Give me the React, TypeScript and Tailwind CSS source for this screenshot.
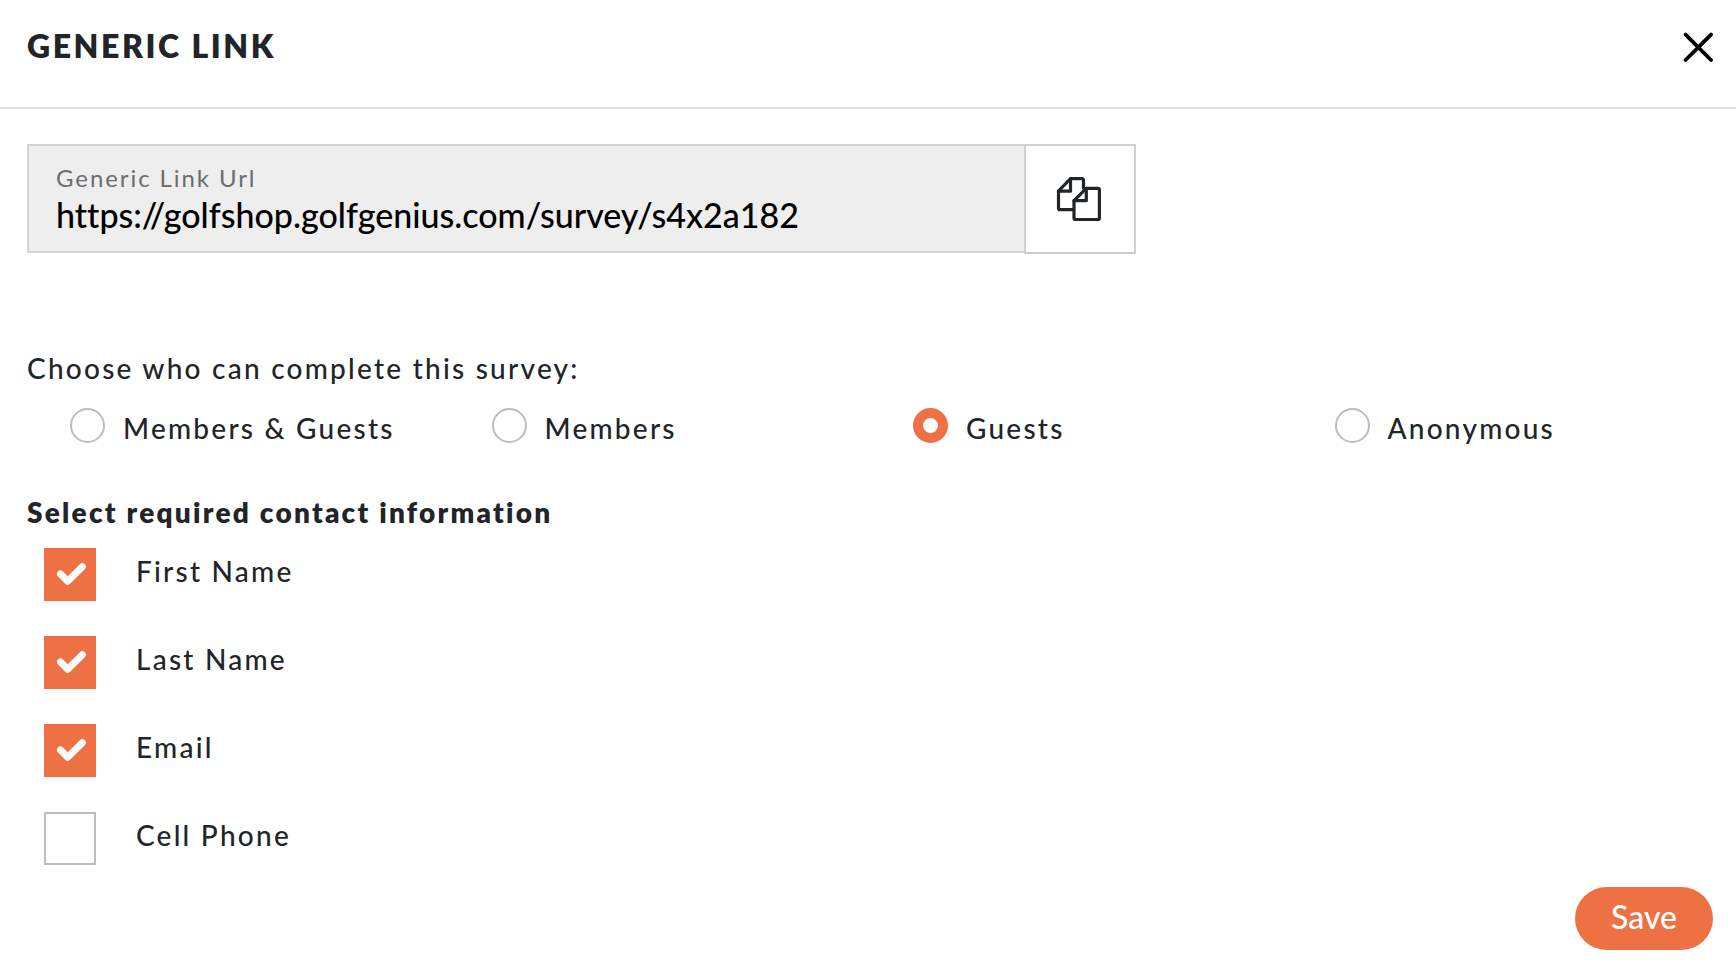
import { useState } from 'react';

const audiences = ['Members & Guests', 'Members', 'Guests', 'Anonymous'];
const contactFields = ['First Name', 'Last Name', 'Email', 'Cell Phone'];

function CloseIcon() {
  return (
    <svg viewBox="0 0 30 30" className="size-[30px]" fill="none" stroke="currentColor" strokeWidth="3.8" strokeLinecap="round" aria-hidden="true">
      <path d="M2.6 2.6l25.4 25.4M28 2.6L2.6 28" />
    </svg>
  );
}

function CopyIcon() {
  return (
    <svg viewBox="1 0 44 44" className="size-11" fill="none" stroke="currentColor" strokeWidth="3.2" strokeLinejoin="round" strokeLinecap="round" aria-hidden="true" overflow="visible">
      <path d="M16.5 32.7H3a1.5 1.5 0 0 1-1.5-1.5V14L13.5 1.7H25a1.5 1.5 0 0 1 1.5 1.5v8" />
      <path d="M13.5 1.7V14.2H1.5" />
      <path d="M29.3 11.3h11.6a1.5 1.5 0 0 1 1.5 1.5V41a1.5 1.5 0 0 1-1.5 1.5H18.5A1.5 1.5 0 0 1 17 41V23.7z" />
      <path d="M29.3 11.3v12.4H17" />
    </svg>
  );
}

function CheckIcon() {
  return (
    <svg viewBox="0 0 52 53" className="pointer-events-none col-start-1 row-start-1 hidden h-[53px] w-[52px] peer-checked:block" fill="none" stroke="white" strokeWidth="7" strokeLinecap="round" strokeLinejoin="round" aria-hidden="true">
      <path d="M16.5 26l7.2 7.2L38.3 18.7" />
    </svg>
  );
}

export default function App() {
  const [audience, setAudience] = useState('Guests');
  const [required, setRequired] = useState(['First Name', 'Last Name', 'Email']);

  const toggle = (field: string) =>
    setRequired((list) => (list.includes(field) ? list.filter((f) => f !== field) : [...list, field]));

  return (
    <div className="min-h-screen bg-white font-['Lato',sans-serif] text-[28px] leading-9 font-medium text-[#212529] [font-variant-ligatures:none]">
      <header className="flex items-start justify-between border-b-2 border-[#dee2e6] pt-7 pr-[23px] pb-[43px] pl-[27px]">
        <h1 className="text-[32px] leading-9 font-extrabold tracking-[0.08em]">GENERIC LINK</h1>
        <button type="button" aria-label="Close" className="mt-1 text-black">
          <CloseIcon />
        </button>
      </header>

      <form className="pt-[35px] pr-[23px] pb-[30px] pl-[27px]" onSubmit={(e) => e.preventDefault()}>
        <div className="flex w-full max-w-[1109px]">
          <div className="flex h-[109px] min-w-0 flex-1 flex-col border-2 border-r-0 border-[#ced4da] bg-[#eeeeee] px-[27px] pt-[18px]">
            <label htmlFor="link-url" className="text-2xl leading-7 font-normal tracking-[0.08em] text-[#6c6d70]">
              Generic Link Url
            </label>
            <input
              id="link-url"
              readOnly
              value="https://golfshop.golfgenius.com/survey/s4x2a182"
              className="h-11 w-full bg-transparent text-[34px] text-black outline-none"
            />
          </div>
          <button type="button" aria-label="Copy link" className="flex h-[110px] w-28 items-center justify-center border-2 border-[#d0d0d0] bg-white">
            <CopyIcon />
          </button>
        </div>

        <fieldset className="mt-[96px]">
          <legend className="tracking-[0.08em]">Choose who can complete this survey:</legend>
          <div className="mt-[22px] grid grid-cols-4">
            {audiences.map((name) => (
              <label key={name} className="flex items-start gap-[18px] pl-[43px] tracking-[0.08em]">
                <input
                  type="radio"
                  name="audience"
                  checked={audience === name}
                  onChange={() => setAudience(name)}
                  className="size-[35px] shrink-0 appearance-none rounded-full border-2 border-[#bdbdbd] bg-white checked:border-[10px] checked:border-[#ee7143]"
                />
                <span className="pt-0.5">{name}</span>
              </label>
            ))}
          </div>
        </fieldset>

        <fieldset className="mt-12">
          <legend className="font-extrabold tracking-[0.08em]">Select required contact information</legend>
          <div className="mt-[18px] flex flex-col items-start gap-[35px] pl-[17px]">
            {contactFields.map((name) => (
              <label key={name} className="flex items-start gap-10 tracking-[0.08em]">
                <span className="grid">
                  <input
                    type="checkbox"
                    checked={required.includes(name)}
                    onChange={() => toggle(name)}
                    className="peer col-start-1 row-start-1 h-[53px] w-[52px] appearance-none border-2 border-[#bdbdbd] bg-white checked:border-[#ee7143] checked:bg-[#ee7143]"
                  />
                  <CheckIcon />
                </span>
                <span className="pt-[5px]">{name}</span>
              </label>
            ))}
          </div>
        </fieldset>

        <div className="mt-[22px] flex justify-end">
          <button type="submit" className="h-[63px] rounded-full bg-[#ee7143] px-9 pb-1 text-[32px] text-white">
            Save
          </button>
        </div>
      </form>
    </div>
  );
}
